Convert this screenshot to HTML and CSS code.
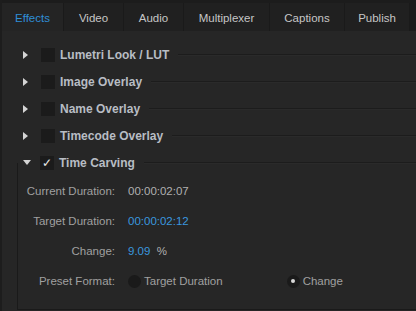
FILE: index.html
```html
<!DOCTYPE html>
<html lang="en">
<head>
    <meta charset="UTF-8">
    <title>Export Settings - Effects</title>
    <link rel="stylesheet" href="styles.css">
</head>
<body>
    <div class="panel">
        <div class="tabs">
            <div class="tab active tab-effects">Effects</div>
            <div class="tab tab-video">Video</div>
            <div class="tab tab-audio">Audio</div>
            <div class="tab tab-mux">Multiplexer</div>
            <div class="tab tab-captions">Captions</div>
            <div class="tab tab-publish">Publish</div>
        </div>

        <div class="content">
            <div class="effect">
                <span class="twisty"></span>
                <span class="check"></span>
                <span class="name">Lumetri Look / LUT</span>
                <span class="rule"></span>
            </div>
            <div class="effect">
                <span class="twisty"></span>
                <span class="check"></span>
                <span class="name">Image Overlay</span>
                <span class="rule"></span>
            </div>
            <div class="effect">
                <span class="twisty"></span>
                <span class="check"></span>
                <span class="name">Name Overlay</span>
                <span class="rule"></span>
            </div>
            <div class="effect">
                <span class="twisty"></span>
                <span class="check"></span>
                <span class="name">Timecode Overlay</span>
                <span class="rule"></span>
            </div>
            <div class="effect">
                <span class="twisty open"></span>
                <span class="check checked">&#10003;</span>
                <span class="name">Time Carving</span>
                <span class="rule"></span>
            </div>

            <!-- settings for the expanded effect -->
            <div class="group">
                <div class="prop">
                    <span class="label">Current Duration:</span>
                    <span class="value">00:00:02:07</span>
                </div>
                <div class="prop">
                    <span class="label">Target Duration:</span>
                    <span class="value link">00:00:02:12</span>
                </div>
                <div class="prop">
                    <span class="label">Change:</span>
                    <span class="value"><span class="link">9.09</span>&nbsp;&nbsp;%</span>
                </div>
                <div class="prop">
                    <span class="label">Preset Format:</span>
                    <span class="radios">
                        <span class="radio"><span class="dot"></span>Target Duration</span>
                        <span class="radio"><span class="dot on"></span>Change</span>
                    </span>
                </div>
            </div>
        </div>
    </div>
</body>
</html>
```

FILE: styles.css
```css
body {
    margin: 0;
    background-color: #262626;
    font-family: "Liberation Sans", Arial, sans-serif;
    font-size: 11.5px;
    color: #a0a0a0;
}

.panel {
    width: 416px;
    height: 311px;
    overflow: hidden;
    border-left: 2px solid #1d1d1d;
    box-sizing: border-box;
}

.tabs {
    display: flex;
    height: 31px;
    padding-top: 3px;
    box-sizing: border-box;
    background-color: #1c1c1c;
}

.tab {
    display: flex;
    align-items: center;
    justify-content: center;
    padding-top: 1px;
    box-sizing: border-box;
    font-size: 11.5px;
    color: #c6c6c6;
    background-color: #202020;
    border-right: 1px solid #1a1a1a;
}

.tab.active {
    color: #2f8ed6;
    background-color: #242424;
}

.tab-effects { width: 62px; }
.tab-video { width: 60px; }
.tab-audio { width: 60px; }
.tab-mux { width: 86px; }
.tab-captions { width: 75px; }
.tab-publish { width: 65px; }

.content {
    padding-top: 10px;
}

.effect {
    display: flex;
    align-items: center;
    height: 27px;
    padding-left: 21px;
}

.twisty {
    width: 0;
    height: 0;
    border-top: 4px solid transparent;
    border-bottom: 4px solid transparent;
    border-left: 5px solid #d4d4d4;
    margin-right: 13px;
}

.twisty.open {
    border-left: 4.5px solid transparent;
    border-right: 4.5px solid transparent;
    border-top: 5px solid #d4d4d4;
    border-bottom: 0;
    margin-right: 9px;
}

.check {
    width: 14px;
    height: 14px;
    background-color: #1b1b1b;
    margin-right: 5px;
    color: #e6e6e6;
    font-size: 12px;
    line-height: 14px;
    text-align: center;
}

.name {
    font-weight: bold;
    font-size: 12px;
    color: #b8bdc4;
}

.rule {
    flex: 1;
    margin-left: 9px;
    border-top: 1px solid #1c1c1c;
    border-bottom: 1px solid #2a2a2a;
}

.group {
    margin-left: 15px;
    margin-top: -13px;
    padding-top: 13px;
    padding-bottom: 13px;
    border-left: 1px solid #1a1a1a;
    border-bottom: 1px solid #1a1a1a;
}

.prop {
    display: flex;
    align-items: center;
    height: 30px;
}

.label {
    width: 97px;
    text-align: right;
    margin-right: 13px;
}

.value {
    color: #b0b0b0;
}

.link {
    color: #3a97de;
}

.radios {
    display: flex;
    gap: 64px;
}

.radio {
    display: flex;
    align-items: center;
    gap: 3px;
}

.dot {
    width: 13px;
    height: 13px;
    border-radius: 50%;
    background-color: #1a1a1a;
    display: flex;
    align-items: center;
    justify-content: center;
}

.dot.on::after {
    content: "";
    width: 4px;
    height: 4px;
    border-radius: 50%;
    background-color: #d8d8d8;
}
```
